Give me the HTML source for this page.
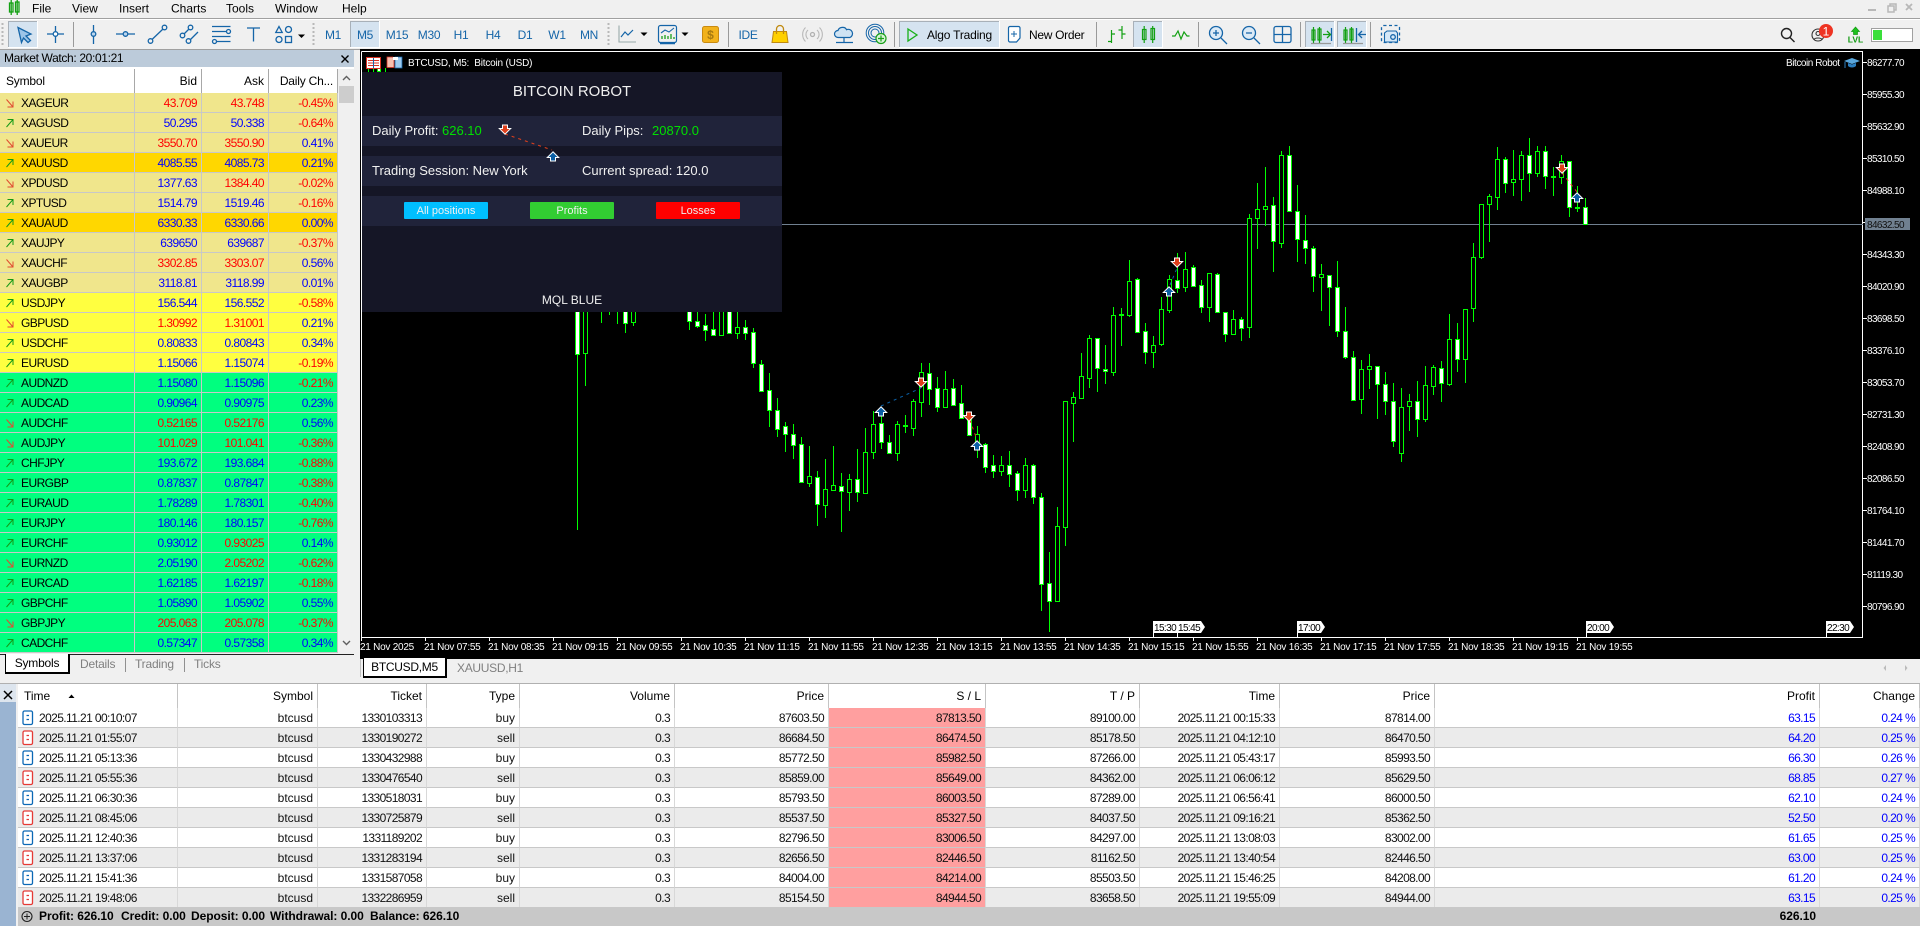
<!DOCTYPE html>
<html><head><meta charset="utf-8"><title>MT5</title>
<style>
html,body{margin:0;padding:0;width:1920px;height:926px;overflow:hidden;background:#f0f0f0;font-family:"Liberation Sans",sans-serif;font-size:12px;color:#000}
.a{position:absolute}
table{position:absolute;border-collapse:separate;border-spacing:0;table-layout:fixed}
td,th{box-sizing:border-box;padding:0 3px;text-align:right;font-weight:normal;white-space:nowrap;overflow:hidden}
#mw{left:0;top:69px;width:338px}
#mw th{height:24px;background:#fff;border-right:1px solid #a8a8a8;padding:0 4px}
#mw th:first-child{text-align:left;letter-spacing:-.2px;padding-left:6px}
#mw td{height:20px;border-bottom:1px solid #c8c8c8;border-right:1px solid #c8c8c8;letter-spacing:-.55px;padding:0 4px 0 0}
#mw td:first-child{text-align:left;padding-left:21px;letter-spacing:-.55px;font-size:12px}
.k td{background:#f0e68c}.g td{background:#ffd700}.y td{background:#ffff40}.s td{background:#00ff7f}
.r{color:#f00}.b{color:#00f}
#tr{left:18px;top:684px;width:1902px}
#tr th{height:24px;background:#fff;border-right:1px solid #c4c4c4;padding:0 4px}
#tr td{height:20px;border-bottom:1px solid #c8c8c8;border-right:1px solid #d8d8d8;padding:0 4px;letter-spacing:-.62px;color:#111}
#tr tr:nth-child(odd) td{background:#fff}
#tr tr:nth-child(even) td{background:#ebebeb}
#tr td.sl{background:#ff9f9f!important}
#tr td.bl{color:#00f}
#tr td.lt{letter-spacing:0}
#tr td:first-child{text-align:left;padding-left:21px;letter-spacing:-.6px}
.sm{position:absolute;top:907px;line-height:19px;font-weight:bold;letter-spacing:-.05px;white-space:nowrap}
</style></head><body>

<div class="a" style="left:0;top:18px;width:1920px;height:1px;background:#a0a0a0"></div>
<div class="a" style="left:0;top:19px;width:1920px;height:1px;background:#fff"></div>
<div class="a" style="left:0;top:49px;width:360px;height:1px;background:#a0a0a0"></div>
<div class="a" style="left:360px;top:49px;width:1560px;height:610px;background:#000"></div>

<!-- Market watch -->
<div class="a" style="left:0;top:50px;width:354px;height:17px;background:#bccbda;line-height:17px;padding-left:4px;letter-spacing:-.35px;box-sizing:border-box">Market Watch: 20:01:21</div>
<div class="a" style="left:0;top:67px;width:354px;height:2px;background:#fff"></div>
<table id="mw"><colgroup><col style="width:135px"><col style="width:67px"><col style="width:67px"><col style="width:69px"></colgroup>
<thead><tr><th>Symbol</th><th>Bid</th><th>Ask</th><th style="letter-spacing:-.2px">Daily Ch...</th></tr></thead><tbody>
<tr class="k"><td>XAGEUR</td><td class="r">43.709</td><td class="r">43.748</td><td class="r">-0.45%</td></tr>
<tr class="k"><td>XAGUSD</td><td class="b">50.295</td><td class="b">50.338</td><td class="r">-0.64%</td></tr>
<tr class="k"><td>XAUEUR</td><td class="r">3550.70</td><td class="r">3550.90</td><td class="b">0.41%</td></tr>
<tr class="g"><td>XAUUSD</td><td class="b">4085.55</td><td class="b">4085.73</td><td class="b">0.21%</td></tr>
<tr class="k"><td>XPDUSD</td><td class="b">1377.63</td><td class="r">1384.40</td><td class="r">-0.02%</td></tr>
<tr class="k"><td>XPTUSD</td><td class="b">1514.79</td><td class="b">1519.46</td><td class="r">-0.16%</td></tr>
<tr class="g"><td>XAUAUD</td><td class="b">6330.33</td><td class="b">6330.66</td><td class="b">0.00%</td></tr>
<tr class="k"><td>XAUJPY</td><td class="b">639650</td><td class="b">639687</td><td class="r">-0.37%</td></tr>
<tr class="k"><td>XAUCHF</td><td class="r">3302.85</td><td class="r">3303.07</td><td class="b">0.56%</td></tr>
<tr class="k"><td>XAUGBP</td><td class="b">3118.81</td><td class="b">3118.99</td><td class="b">0.01%</td></tr>
<tr class="y"><td>USDJPY</td><td class="b">156.544</td><td class="b">156.552</td><td class="r">-0.58%</td></tr>
<tr class="y"><td>GBPUSD</td><td class="r">1.30992</td><td class="r">1.31001</td><td class="b">0.21%</td></tr>
<tr class="y"><td>USDCHF</td><td class="b">0.80833</td><td class="b">0.80843</td><td class="b">0.34%</td></tr>
<tr class="y"><td>EURUSD</td><td class="b">1.15066</td><td class="b">1.15074</td><td class="r">-0.19%</td></tr>
<tr class="s"><td>AUDNZD</td><td class="b">1.15080</td><td class="b">1.15096</td><td class="r">-0.21%</td></tr>
<tr class="s"><td>AUDCAD</td><td class="b">0.90964</td><td class="b">0.90975</td><td class="b">0.23%</td></tr>
<tr class="s"><td>AUDCHF</td><td class="r">0.52165</td><td class="r">0.52176</td><td class="b">0.56%</td></tr>
<tr class="s"><td>AUDJPY</td><td class="r">101.029</td><td class="r">101.041</td><td class="r">-0.36%</td></tr>
<tr class="s"><td>CHFJPY</td><td class="b">193.672</td><td class="b">193.684</td><td class="r">-0.88%</td></tr>
<tr class="s"><td>EURGBP</td><td class="b">0.87837</td><td class="b">0.87847</td><td class="r">-0.38%</td></tr>
<tr class="s"><td>EURAUD</td><td class="b">1.78289</td><td class="b">1.78301</td><td class="r">-0.40%</td></tr>
<tr class="s"><td>EURJPY</td><td class="b">180.146</td><td class="b">180.157</td><td class="r">-0.76%</td></tr>
<tr class="s"><td>EURCHF</td><td class="b">0.93012</td><td class="r">0.93025</td><td class="b">0.14%</td></tr>
<tr class="s"><td>EURNZD</td><td class="b">2.05190</td><td class="r">2.05202</td><td class="r">-0.62%</td></tr>
<tr class="s"><td>EURCAD</td><td class="b">1.62185</td><td class="b">1.62197</td><td class="r">-0.18%</td></tr>
<tr class="s"><td>GBPCHF</td><td class="b">1.05890</td><td class="b">1.05902</td><td class="b">0.55%</td></tr>
<tr class="s"><td>GBPJPY</td><td class="r">205.063</td><td class="r">205.078</td><td class="r">-0.37%</td></tr>
<tr class="s"><td>CADCHF</td><td class="b">0.57347</td><td class="b">0.57358</td><td class="b">0.34%</td></tr>
</tbody></table>
<div class="a" style="left:339px;top:86px;width:15px;height:17px;background:#cdcdcd"></div>

<!-- tab strip left -->
<div class="a" style="left:0;top:654px;width:354px;height:1px;background:#222"></div>
<div class="a" style="left:5px;top:654px;width:65px;height:20px;background:#fff;border:1px solid #000;border-top:0;border-right-width:2px;border-bottom-width:2px;box-sizing:border-box;text-align:center;line-height:18px;letter-spacing:-.2px">Symbols</div>
<div class="a" style="left:80px;top:655px;color:#808080;line-height:18px;letter-spacing:-.2px">Details</div>
<div class="a" style="left:135px;top:655px;color:#808080;line-height:18px;letter-spacing:-.2px">Trading</div>
<div class="a" style="left:194px;top:655px;color:#808080;line-height:18px;letter-spacing:-.2px">Ticks</div>
<div class="a" style="left:125px;top:658px;width:1px;height:14px;background:#909090"></div>
<div class="a" style="left:184px;top:658px;width:1px;height:14px;background:#909090"></div>

<!-- tab strip chart -->
<div class="a" style="left:360px;top:659px;width:1px;height:18px;background:#c0c0c0"></div>
<div class="a" style="left:363px;top:658px;width:84px;height:20px;background:#fff;border:1px solid #000;border-top:0;border-right-width:2px;border-bottom-width:2px;box-sizing:border-box;text-align:center;line-height:18px;letter-spacing:-.3px">BTCUSD,M5</div>
<div class="a" style="left:457px;top:659px;color:#808080;line-height:18px;letter-spacing:-.3px">XAUUSD,H1</div>

<!-- trade table -->
<div class="a" style="left:0;top:683px;width:1920px;height:1px;background:#b0b0b0"></div>
<div class="a" style="left:0;top:684px;width:16px;height:242px;background:#9ab4d2"></div>
<div class="a" style="left:0;top:684px;width:16px;height:18px;background:#dde5ee"></div>
<table id="tr"><colgroup><col style="width:160px"><col style="width:140px"><col style="width:109px"><col style="width:93px"><col style="width:155px"><col style="width:154px"><col style="width:157px"><col style="width:154px"><col style="width:140px"><col style="width:155px"><col style="width:385px"><col style="width:100px"></colgroup>
<thead><tr style="background:#fff"><th style="text-align:left;padding-left:6px">Time</th><th>Symbol</th><th>Ticket</th><th>Type</th><th>Volume</th><th>Price</th><th>S / L</th><th>T / P</th><th>Time</th><th>Price</th><th>Profit</th><th>Change</th></tr></thead><tbody>
<tr><td>2025.11.21 00:10:07</td><td class="lt">btcusd</td><td>1330103313</td><td class="lt">buy</td><td>0.3</td><td>87603.50</td><td class="sl">87813.50</td><td>89100.00</td><td>2025.11.21 00:15:33</td><td>87814.00</td><td class="bl">63.15</td><td class="bl">0.24 %</td></tr>
<tr><td>2025.11.21 01:55:07</td><td class="lt">btcusd</td><td>1330190272</td><td class="lt">sell</td><td>0.3</td><td>86684.50</td><td class="sl">86474.50</td><td>85178.50</td><td>2025.11.21 04:12:10</td><td>86470.50</td><td class="bl">64.20</td><td class="bl">0.25 %</td></tr>
<tr><td>2025.11.21 05:13:36</td><td class="lt">btcusd</td><td>1330432988</td><td class="lt">buy</td><td>0.3</td><td>85772.50</td><td class="sl">85982.50</td><td>87266.00</td><td>2025.11.21 05:43:17</td><td>85993.50</td><td class="bl">66.30</td><td class="bl">0.26 %</td></tr>
<tr><td>2025.11.21 05:55:36</td><td class="lt">btcusd</td><td>1330476540</td><td class="lt">sell</td><td>0.3</td><td>85859.00</td><td class="sl">85649.00</td><td>84362.00</td><td>2025.11.21 06:06:12</td><td>85629.50</td><td class="bl">68.85</td><td class="bl">0.27 %</td></tr>
<tr><td>2025.11.21 06:30:36</td><td class="lt">btcusd</td><td>1330518031</td><td class="lt">buy</td><td>0.3</td><td>85793.50</td><td class="sl">86003.50</td><td>87289.00</td><td>2025.11.21 06:56:41</td><td>86000.50</td><td class="bl">62.10</td><td class="bl">0.24 %</td></tr>
<tr><td>2025.11.21 08:45:06</td><td class="lt">btcusd</td><td>1330725879</td><td class="lt">sell</td><td>0.3</td><td>85537.50</td><td class="sl">85327.50</td><td>84037.50</td><td>2025.11.21 09:16:21</td><td>85362.50</td><td class="bl">52.50</td><td class="bl">0.20 %</td></tr>
<tr><td>2025.11.21 12:40:36</td><td class="lt">btcusd</td><td>1331189202</td><td class="lt">buy</td><td>0.3</td><td>82796.50</td><td class="sl">83006.50</td><td>84297.00</td><td>2025.11.21 13:08:03</td><td>83002.00</td><td class="bl">61.65</td><td class="bl">0.25 %</td></tr>
<tr><td>2025.11.21 13:37:06</td><td class="lt">btcusd</td><td>1331283194</td><td class="lt">sell</td><td>0.3</td><td>82656.50</td><td class="sl">82446.50</td><td>81162.50</td><td>2025.11.21 13:40:54</td><td>82446.50</td><td class="bl">63.00</td><td class="bl">0.25 %</td></tr>
<tr><td>2025.11.21 15:41:36</td><td class="lt">btcusd</td><td>1331587058</td><td class="lt">buy</td><td>0.3</td><td>84004.00</td><td class="sl">84214.00</td><td>85503.50</td><td>2025.11.21 15:46:25</td><td>84208.00</td><td class="bl">61.20</td><td class="bl">0.24 %</td></tr>
<tr><td>2025.11.21 19:48:06</td><td class="lt">btcusd</td><td>1332286959</td><td class="lt">sell</td><td>0.3</td><td>85154.50</td><td class="sl">84944.50</td><td>83658.50</td><td>2025.11.21 19:55:09</td><td>84944.00</td><td class="bl">63.15</td><td class="bl">0.25 %</td></tr>
</tbody></table>
<div class="a" style="left:18px;top:907px;width:1902px;height:19px;background:#c8c8c8"></div>
<div class="sm" style="left:39px">Profit: 626.10</div>
<div class="sm" style="left:121px">Credit: 0.00</div>
<div class="sm" style="left:191px">Deposit: 0.00</div>
<div class="sm" style="left:270px">Withdrawal: 0.00</div>
<div class="sm" style="left:370px">Balance: 626.10</div>
<div class="sm" style="left:1716px;width:100px;text-align:right">626.10</div>

<svg class="a" style="left:0;top:0;pointer-events:none" width="1920" height="926" viewBox="0 0 1920 926" font-family="Liberation Sans, sans-serif">
<defs>
<g id="u" fill="none" stroke="#159a15" stroke-width="1"><path d="M6.500 4L13-3.500M7.500-3.500H13V2"/></g>
<g id="d" fill="none" stroke="#e04a30" stroke-width="1"><path d="M6.500-3.500L13 4M7.500 4H13V-1.500"/></g>
<g id="ib" fill="none" stroke="#0b68b5" stroke-width="1.300"><rect x="23" y="-6.500" width="9.500" height="13.500" rx="1.500" fill="#fff"/><path d="M26.500-2h2.500M26.500 2h2.500"/></g>
<g id="ir" fill="none" stroke="#e53935" stroke-width="1.300"><rect x="23" y="-6.500" width="9.500" height="13.500" rx="1.500" fill="#fff"/><path d="M26.500-2h2.500M26.500 2h2.500"/></g>
<polygon id="au" points="0,-4.500 4.500,0 2,0 2,3.500 -2,3.500 -2,0 -4.500,0" fill="#0b5fa5" stroke="#fff" stroke-width="2" paint-order="stroke"/>
<polygon id="ad" points="0,4.500 4.500,0 2,0 2,-3.500 -2,-3.500 -2,0 -4.500,0" fill="#e0401c" stroke="#fff" stroke-width="2" paint-order="stroke"/>
</defs>

<!-- market watch arrows -->
<use href="#d" y="103"/><use href="#u" y="123"/><use href="#d" y="143"/><use href="#u" y="163"/><use href="#d" y="183"/><use href="#u" y="203"/><use href="#u" y="223"/><use href="#u" y="243"/><use href="#d" y="263"/><use href="#u" y="283"/><use href="#u" y="303"/><use href="#d" y="323"/><use href="#u" y="343"/><use href="#u" y="363"/><use href="#u" y="383"/><use href="#u" y="403"/><use href="#d" y="423"/><use href="#d" y="443"/><use href="#u" y="463"/><use href="#u" y="483"/><use href="#u" y="503"/><use href="#u" y="523"/><use href="#u" y="543"/><use href="#d" y="563"/><use href="#u" y="583"/><use href="#u" y="603"/><use href="#d" y="623"/><use href="#u" y="643"/>
<!-- position icons -->
<use href="#ib" y="717.500"/><use href="#ir" y="737.500"/><use href="#ib" y="757.500"/><use href="#ir" y="777.500"/><use href="#ib" y="797.500"/><use href="#ir" y="817.500"/><use href="#ib" y="837.500"/><use href="#ir" y="857.500"/><use href="#ib" y="877.500"/><use href="#ir" y="897.500"/>
<path d="M68.500 698l3-3.500 3 3.500z" fill="#000"/>
<path d="M4 691l8 8M12 691l-8 8" stroke="#000" stroke-width="1.500"/>
<circle cx="27" cy="916.500" r="5" fill="none" stroke="#222" stroke-width="1.100"/><path d="M24 916.500h6M27 913.500v6" stroke="#222"/>
<!-- mw controls -->
<path d="M341.500 55.500l7 7M348.500 55.500l-7 7" stroke="#000" stroke-width="1.400"/>
<path d="M343 80l3.500-3.500 3.500 3.500" fill="none" stroke="#606060" stroke-width="1.400"/>
<path d="M343 641l3.500 3.500 3.500-3.500" fill="none" stroke="#606060" stroke-width="1.400"/>
<path d="M1886 665l-2.500 3 2.500 3zM1905 665l2.500 3-2.500 3z" fill="#bbb"/>

<!-- menu -->
<g font-size="12" fill="#000">
<text x="32" y="12.500">File</text><text x="72" y="12.500">View</text><text x="119" y="12.500">Insert</text><text x="171" y="12.500">Charts</text><text x="226" y="12.500">Tools</text><text x="275" y="12.500">Window</text><text x="342" y="12.500">Help</text>
</g>
<g fill="none" stroke="#12a012" stroke-width="1.300"><rect x="9.500" y="3" width="3.500" height="9"/><rect x="15.500" y="2" width="3.500" height="10"/><path d="M11.200 0v15M17.200 0v15"/></g>
<path d="M1868 10h8" stroke="#b8b8b8" stroke-width="2"/>
<path d="M1888 6h6v6h-6zM1890 6v-2h6v6h-2" fill="none" stroke="#b8b8b8" stroke-width="1.500"/>
<path d="M1906 4l6 6M1912 4l-6 6" stroke="#b8b8b8" stroke-width="1.800"/>

<!-- toolbar active buttons -->
<g fill="#d5e3f0" stroke="#fff"><rect x="8.500" y="21.500" width="29" height="26"/><rect x="350.500" y="21.500" width="29" height="26"/><rect x="899.500" y="21.500" width="100" height="26"/><rect x="1133.500" y="21.500" width="29" height="26"/><rect x="1305.500" y="21.500" width="29" height="26"/><rect x="1337.500" y="21.500" width="29" height="26"/></g>
<path d="M8.500 47V21.500H37M350.500 47V21.500H379M899.500 47V21.500H999M1133.500 47V21.500H1162M1305.500 47V21.500H1334M1337.500 47V21.500H1366" fill="none" stroke="#a8b0b8"/>
<!-- grips & seps -->
<path d="M2.500 23v24M313.500 23v24M608.500 23v24" stroke="#b8b8b8" stroke-width="2" stroke-dasharray="2 2"/>
<path d="M73.500 22v25M728.500 22v25M894.500 22v25M1096.500 22v25M1198.500 22v25M1300.500 22v25M1370.500 22v25" stroke="#9a9a9a"/>

<g fill="none" stroke="#1565a8" stroke-width="1.300">
<path d="M18 27.500l13 6.500-5 2 4.500 4.500-2.500 2-4.500-4.500-2 4.500z" fill="#9cc4e8"/>
<path d="M47 34h17M55.500 26v17"/><circle cx="55.500" cy="34" r="2.300" fill="#fff"/>
<path d="M93.500 25v19"/><circle cx="93.500" cy="34" r="2.300" fill="#bcd6ee"/>
<path d="M116 34h19"/><circle cx="125.500" cy="34" r="2.300" fill="#bcd6ee"/>
<path d="M152 39.500l11-10.500"/><circle cx="150.500" cy="41" r="2.300"/><circle cx="164.500" cy="27.500" r="2.300"/>
<path d="M184 34l5-5M190 40l8-8"/><circle cx="182.500" cy="35.500" r="2.300"/><circle cx="190.500" cy="27.500" r="2.300"/><circle cx="188.500" cy="41" r="2.300"/>
<path d="M212 26.500h18.500M212 31.500h14.500M212 36.500h18.500M217 41.500h13.500"/><circle cx="228.500" cy="31.500" r="2"/><circle cx="214.500" cy="41.500" r="2"/>
<path d="M247 28h13M253.500 28v13.500"/>
<path d="M279 26.500l3.200 6h-6.400z"/><circle cx="288.500" cy="29.500" r="3"/><circle cx="279" cy="39.500" r="3"/><rect x="285.500" y="36.500" width="6" height="6"/>
</g>
<path d="M298 34.500h7l-3.500 3.500zM640.500 32.500h7l-3.500 3.500zM681.500 32.500h7l-3.500 3.500z" fill="#000"/>
<g font-size="12" fill="#1565a8" text-anchor="middle" letter-spacing="-.3">
<text x="333" y="39">M1</text><text x="365" y="39">M5</text><text x="397" y="39">M15</text><text x="429" y="39">M30</text><text x="461" y="39">H1</text><text x="493" y="39">H4</text><text x="525" y="39">D1</text><text x="557" y="39">W1</text><text x="589" y="39">MN</text><text x="748" y="39">IDE</text>
</g>
<!-- chart type icon -->
<g fill="none">
<path d="M619 25.500v16.500h17" stroke="#9aa" stroke-width="1.100"/><path d="M621 37l4-5 3 3 5-5" stroke="#1565a8" stroke-width="1.200"/>
<rect x="658.500" y="25.500" width="18" height="17" rx="2" stroke="#1565a8" stroke-width="1.200"/><path d="M660 43.500h15" stroke="#1565a8" stroke-width="1.500"/>
<path d="M661 33l4-3 4 2 5-4" stroke="#1565a8" stroke-width="1.100"/><path d="M662 39v-3M665 39v-4M668 39v-3M671 39v-5M674 39v-2" stroke="#18a018" stroke-width="1.300"/>
<rect x="702.500" y="26.500" width="16" height="16" rx="2" fill="#f2b21b" stroke="#c98a10"/>
<path d="M773.500 31.500h13l1.500 11h-16z" fill="#ffd000" stroke="#c08a10"/><path d="M776.500 34v-5a3.500 3.500 0 0 1 7 0v5" stroke="#c08a10" stroke-width="1.300"/>
<circle cx="812.500" cy="34.500" r="2" stroke="#b0b0b0" stroke-width="1.300"/><path d="M808 30a6 6 0 0 0 0 9M817 30a6 6 0 0 1 0 9M805.500 27.500a10 10 0 0 0 0 14M819.500 27.500a10 10 0 0 1 0 14" stroke="#b8b8b8" stroke-width="1.100"/>
<path d="M838 37.500a3.500 3.500 0 0 1 0-7c1-3.500 7-4.500 8.500-.8a3.900 3.900 0 0 1 3.500 7.800z" fill="#cfe3f3" stroke="#1565a8" stroke-width="1.200"/><path d="M844 38v4M836 42.500h17" stroke="#1565a8" stroke-width="1.200"/>
<circle cx="875" cy="33" r="6.500" stroke="#1565a8"/><circle cx="875" cy="33" r="4" stroke="#1565a8"/><circle cx="875" cy="33" r="8.800" stroke="#1565a8"/>
<circle cx="881" cy="38.500" r="5" fill="#d8f4d8" stroke="#18a018" stroke-width="1.200"/><path d="M878 38.500h6M881 35.500v6" stroke="#18a018" stroke-width="1.200"/>
<path d="M908 29l9 6-9 6z" stroke="#18b018" stroke-width="1.300"/>
<path d="M1010 26.500h8.500a1.500 1.500 0 0 1 1.500 1.500v10l-3.500 4h-6.500a1.500 1.500 0 0 1-1.500-1.500v-12.500a1.500 1.500 0 0 1 1.500-1.500z" fill="#fff" stroke="#1565a8" stroke-width="1.200"/><path d="M1011 34h6M1014 31v6" stroke="#1565a8"/>
</g>
<text x="710.500" y="39" font-size="12" font-weight="bold" fill="#a87a10" text-anchor="middle">$</text>
<text x="927" y="39" font-size="12" letter-spacing="-.2">Algo Trading</text>
<text x="1029" y="39" font-size="12" letter-spacing="-.3">New Order</text>
<!-- bar/candle/line -->
<g fill="none" stroke="#12a012" stroke-width="1.200">
<path d="M1111.500 30v13M1108 41.500h3.500M1111.500 34h3.500M1122 26v13M1118.500 30h3.500M1122 34h3.500"/>
<rect x="1142.500" y="29.500" width="3.500" height="10"/><rect x="1151" y="28.500" width="3.500" height="11"/><path d="M1144.200 26v17M1152.700 26v17"/>
<path d="M1172 36h3l3-5 3 8 3-7 3 4h2.500"/>
<rect x="1312" y="30" width="3" height="10"/><rect x="1318" y="29" width="3" height="11"/><path d="M1313.500 27v16M1319.500 27v16"/>
<rect x="1344" y="30" width="3" height="10"/><rect x="1350" y="29" width="3" height="11"/><path d="M1345.500 27v16M1351.500 27v16"/>
</g>
<g fill="none" stroke="#1565a8" stroke-width="1.300">
<circle cx="1216" cy="33" r="6.500" fill="#dceaf6"/><path d="M1221 38l6 6M1213 33h6M1216 30v6"/>
<circle cx="1249" cy="33" r="6.500" fill="#dceaf6"/><path d="M1254 38l6 6M1246 33h6"/>
<rect x="1274" y="26.500" width="17" height="16" rx="2"/><path d="M1274 34.500h17M1282.500 26.500v16"/>
<path d="M1323 34.500h7M1327 31l3.500 3.500-3.500 3.500" stroke="#12a012"/><path d="M1331.500 28v13"/><path d="M1311 43.500h20" stroke="#999"/>
<path d="M1356.500 28v14"/><path d="M1366 34.500h-7M1362 31l-3.500 3.500 3.500 3.500"/><path d="M1343 43.500h20" stroke="#999"/>
<rect x="1381.500" y="25.500" width="18" height="17" rx="2" stroke-dasharray="3 2.500"/><path d="M1387 31h9l1.500 2v9h-13v-9z" fill="#d6e8f7" stroke-width="1.100"/><circle cx="1393" cy="37" r="2.300"/>
</g>
<g fill="none" stroke="#222" stroke-width="1.400"><circle cx="1786.500" cy="33.500" r="5"/><path d="M1790 37.500l4.500 4.500"/></g>
<g fill="none" stroke="#333" stroke-width="1.100"><circle cx="1818" cy="35" r="6"/><circle cx="1818" cy="33.500" r="2"/><path d="M1814 39.500c1-2 7-2 8 0"/></g>
<circle cx="1826" cy="31" r="7" fill="#ee3322"/><text x="1826" y="35.500" font-size="12" fill="#fff" text-anchor="middle">1</text>
<path d="M1855.500 27l4 4.500h-2v3h-4v-3h-2z" fill="#1cc21c" stroke="#159a15" stroke-width=".7"/>
<text x="1855.500" y="42.500" font-size="8.500" fill="#129a12" text-anchor="middle" font-weight="bold">LVL</text>
<rect x="1871.500" y="28.500" width="41" height="13" fill="#fff" stroke="#a0a0a0"/><rect x="1873" y="30" width="9" height="10" fill="#3adf3a"/>

<!-- CHART -->
<path d="M361.500 51.500H1862.500V637" fill="none" stroke="#fff"/>
<path d="M361.500 51.500V637.500H1863" fill="none" stroke="#fff"/>
<path d="M782 224.500H1863" stroke="#708090"/>
<g shape-rendering="crispEdges" stroke="#00ff00" fill="none">
<path stroke-width="1" d="M577.500 280V530M585.500 300V386M601.500 300V323M609.500 300V315M617.500 300V324M625.500 300V333M633.500 300V326M689.500 300V330M697.500 300V328M705.500 314V341M713.500 300V336M721.500 300V335M729.500 300V334M737.500 312V339M745.500 320V340M753.500 328V368M761.500 360V392M769.500 373V427M777.500 398V437M785.500 422V452M793.500 424V459M801.500 437V483M809.500 446V487M817.500 471V526M825.500 459V518M833.500 446V491M841.500 473V532M849.500 474V511M857.500 449V502M865.500 428V494M873.500 411V459M881.500 415V449M889.500 435V454M897.500 421V461M905.500 415V433M913.500 399V436M921.500 363V417M929.500 363V405M937.500 377V412M945.500 371V407M953.500 379V405M961.500 385V418M969.500 415V435M977.500 426V458M985.500 443V473M993.500 455V478M1001.500 456V476M1009.500 451V487M1017.500 471V501M1025.500 458V498M1033.500 464V504M1041.500 493V611M1049.500 552V632M1057.500 507V602M1065.500 401V546M1073.500 392V442M1081.500 353V399M1089.500 335V388M1097.500 338V392M1105.500 345V384M1113.500 307V376M1121.500 308V346M1129.500 260V317M1137.500 278V332M1145.500 323V364M1153.500 336V368M1161.500 297V346M1169.500 275V313M1177.500 253V293M1185.500 252V292M1193.500 265V287M1201.500 280V313M1209.500 273V322M1217.500 273V313M1225.500 312V342M1233.500 310V335M1241.500 317V341M1249.500 214V338M1257.500 183V249M1265.500 167V226M1273.500 197V272M1281.500 151V248M1289.500 146V211M1297.500 185V262M1305.500 215V264M1313.500 246V292M1321.500 264V311M1329.500 275V326M1337.500 261V337M1345.500 307V359M1353.500 351V401M1361.500 360V414M1369.500 354V389M1377.500 366V419M1385.500 372V415M1393.500 383V447M1401.500 388V462M1409.500 394V431M1417.500 381V437M1425.500 366V422M1433.500 365V395M1441.500 361V402M1449.500 314V386M1457.500 323V372M1465.500 309V383M1473.500 243V322M1481.500 204V259M1489.500 194V242M1497.500 147V210M1505.500 157V193M1513.500 150V196M1521.500 151V201M1529.500 138V192M1537.500 146V177M1545.500 146V189M1553.500 167V196M1561.500 155V184M1569.500 161V217M1577.500 186V212M1585.500 198V224M903 426.500h5M903 425.500h5M1119 315.500h5M1119 314.500h5M1551 177.500h5M1551 176.500h5M1575 208.500h5M1575 207.500h5"/>
<path fill="#000" d="M583.500 300.500h4V353.500h-4zM631.500 300.500h4V322.500h-4zM719.500 300.500h4V335.500h-4zM735.500 327.500h4V333.500h-4zM807.500 476.500h4V483.500h-4zM823.500 489.500h4V505.500h-4zM831.500 485.500h4V490.500h-4zM847.500 479.500h4V492.500h-4zM863.500 452.500h4V493.500h-4zM871.500 424.500h4V452.500h-4zM895.500 424.500h4V453.500h-4zM911.500 401.500h4V428.500h-4zM919.500 372.500h4V402.500h-4zM943.500 389.500h4V407.500h-4zM975.500 434.500h4V446.500h-4zM999.500 465.500h4V471.500h-4zM1023.500 465.500h4V490.500h-4zM1055.500 526.500h4V601.500h-4zM1063.500 401.500h4V527.500h-4zM1071.500 397.500h4V403.500h-4zM1079.500 376.500h4V398.500h-4zM1087.500 338.500h4V378.500h-4zM1111.500 315.500h4V372.500h-4zM1127.500 281.500h4V315.500h-4zM1151.500 345.500h4V352.500h-4zM1159.500 309.500h4V344.500h-4zM1167.500 279.500h4V310.500h-4zM1183.500 269.500h4V287.500h-4zM1207.500 273.500h4V307.500h-4zM1231.500 319.500h4V334.500h-4zM1247.500 218.500h4V327.500h-4zM1255.500 209.500h4V218.500h-4zM1263.500 206.500h4V209.500h-4zM1279.500 155.500h4V243.500h-4zM1319.500 274.500h4V277.500h-4zM1359.500 369.500h4V399.500h-4zM1367.500 366.500h4V369.500h-4zM1399.500 407.500h4V453.500h-4zM1407.500 401.500h4V406.500h-4zM1423.500 385.500h4V419.500h-4zM1431.500 367.500h4V386.500h-4zM1447.500 339.500h4V384.500h-4zM1463.500 309.500h4V359.500h-4zM1471.500 257.500h4V308.500h-4zM1479.500 204.500h4V257.500h-4zM1487.500 196.500h4V204.500h-4zM1495.500 159.500h4V197.500h-4zM1511.500 179.500h4V182.500h-4zM1519.500 155.500h4V179.500h-4zM1535.500 151.500h4V173.500h-4zM1559.500 161.500h4V177.500h-4z"/>
<path fill="#fff" d="M575.500 280.500h4V354.500h-4zM623.500 300.500h4V323.500h-4zM687.500 300.500h4V321.500h-4zM695.500 321.500h4V326.500h-4zM703.500 325.500h4V330.500h-4zM711.500 329.500h4V335.500h-4zM727.500 300.500h4V333.500h-4zM743.500 327.500h4V333.500h-4zM751.500 332.500h4V363.500h-4zM759.500 364.500h4V391.500h-4zM767.500 390.500h4V410.500h-4zM775.500 410.500h4V429.500h-4zM783.500 426.500h4V434.500h-4zM791.500 434.500h4V445.500h-4zM799.500 444.500h4V482.500h-4zM815.500 477.500h4V504.500h-4zM839.500 486.500h4V491.500h-4zM855.500 479.500h4V492.500h-4zM879.500 423.500h4V442.500h-4zM887.500 442.500h4V453.500h-4zM927.500 373.500h4V389.500h-4zM935.500 388.500h4V407.500h-4zM951.500 388.500h4V405.500h-4zM959.500 403.500h4V418.500h-4zM967.500 418.500h4V435.500h-4zM983.500 444.500h4V467.500h-4zM991.500 465.500h4V471.500h-4zM1007.500 465.500h4V474.500h-4zM1015.500 473.500h4V490.500h-4zM1031.500 465.500h4V497.500h-4zM1039.500 497.500h4V584.500h-4zM1047.500 583.500h4V601.500h-4zM1095.500 338.500h4V368.500h-4zM1103.500 369.500h4V371.500h-4zM1135.500 279.500h4V332.500h-4zM1143.500 331.500h4V352.500h-4zM1175.500 280.500h4V288.500h-4zM1191.500 267.500h4V286.500h-4zM1199.500 285.500h4V307.500h-4zM1215.500 274.500h4V312.500h-4zM1223.500 312.500h4V334.500h-4zM1239.500 319.500h4V328.500h-4zM1271.500 205.500h4V241.500h-4zM1287.500 155.500h4V211.500h-4zM1295.500 211.500h4V239.500h-4zM1303.500 240.500h4V248.500h-4zM1311.500 248.500h4V276.500h-4zM1327.500 275.500h4V287.500h-4zM1335.500 287.500h4V331.500h-4zM1343.500 331.500h4V357.500h-4zM1351.500 357.500h4V400.500h-4zM1375.500 366.500h4V384.500h-4zM1383.500 384.500h4V401.500h-4zM1391.500 401.500h4V441.500h-4zM1415.500 401.500h4V419.500h-4zM1439.500 368.500h4V383.500h-4zM1455.500 339.500h4V359.500h-4zM1503.500 159.500h4V183.500h-4zM1527.500 155.500h4V173.500h-4zM1543.500 151.500h4V176.500h-4zM1567.500 161.500h4V207.500h-4zM1583.500 207.500h4V224.500h-4z"/>
<path d="M368.500 68v4M373.500 68v4M385.500 68v4"/><rect x="377.500" y="68.500" width="3" height="3" fill="#fff"/>
</g>

<!-- panel -->
<rect x="362" y="72" width="420" height="240" fill="#151626"/>
<rect x="362" y="116" width="420" height="30" fill="#20233a"/>
<rect x="362" y="156" width="420" height="30" fill="#20233a"/>
<rect x="362" y="196" width="420" height="30" fill="#20233a"/>
<rect x="404" y="202" width="84" height="17" rx="1" fill="#00bfff"/>
<rect x="530" y="202" width="84" height="17" rx="1" fill="#32cd32"/>
<rect x="656" y="202" width="84" height="17" rx="1" fill="#ff0000"/>
<g fill="#f0f0f0" font-size="13">
<text x="572" y="96" font-size="15" text-anchor="middle">BITCOIN ROBOT</text>
<text x="372" y="135">Daily Profit:</text><text x="442" y="135" fill="#00e000">626.10</text>
<text x="582" y="135">Daily Pips:</text><text x="652" y="135" fill="#00e000">20870.0</text>
<text x="372" y="175">Trading Session: New York</text>
<text x="582" y="175">Current spread: 120.0</text>
<text x="446" y="214" font-size="11" text-anchor="middle">All positions</text>
<text x="572" y="214" font-size="11" text-anchor="middle">Profits</text>
<text x="698" y="214" font-size="11" text-anchor="middle">Losses</text>
<text x="572" y="304" font-size="12" text-anchor="middle">MQL BLUE</text>
</g>

<!-- trades -->
<g fill="none" stroke-dasharray="3 4" stroke-width="1">
<path d="M505 134L552 150" stroke="#e0401c"/>
<path d="M881 406L921 388" stroke="#0b5fa5"/>
<path d="M970 420L977 440" stroke="#e0201c"/>
<path d="M1170 285L1177 268" stroke="#0b5fa5"/>
<path d="M1562 173L1577 192" stroke="#e0401c"/>
</g>
<use href="#ad" x="505" y="129"/><use href="#au" x="553" y="157"/>
<use href="#au" x="881" y="412"/><use href="#ad" x="921" y="382"/>
<use href="#ad" x="969" y="416"/><use href="#au" x="977" y="446"/>
<use href="#ad" x="1177" y="262"/><use href="#au" x="1169" y="292"/>
<use href="#ad" x="1562" y="168"/><use href="#au" x="1577" y="198"/>

<!-- chart header -->
<rect x="366.500" y="57.500" width="14" height="11" fill="#fff" stroke="#d83020"/>
<path d="M368 60.500h11M368 63h11M368 65.500h11" stroke="#d83020"/><path d="M373.500 58v10" stroke="#1565a8"/>
<path d="M387 57h6l1 1.500v9h-7z" fill="#f6c0b0" stroke="#d83020" stroke-width=".8"/><path d="M395 57h7v11h-7z" fill="#9ecbf0" stroke="#1565a8" stroke-width=".8"/><rect x="393" y="57" width="5" height="3" fill="#fff"/>
<text x="408" y="66" font-size="10" fill="#fff" letter-spacing="-.2" xml:space="preserve">BTCUSD, M5:  Bitcoin (USD)</text>
<text x="1786" y="66" font-size="10" fill="#fff" letter-spacing="-.45">Bitcoin Robot</text>
<path d="M1844 61l8-3 8 3-8 3z" fill="#5aa7dc"/><path d="M1848 63v3c2 2 6 2 8 0v-3l-4 1.500z" fill="#2b7fc0"/><path d="M1845 62v6" stroke="#2b7fc0"/>

<!-- price axis -->
<g fill="#fff" font-size="10" letter-spacing="-.6">
<text x="1867" y="66">86277.70</text><text x="1867" y="98">85955.30</text><text x="1867" y="130">85632.90</text><text x="1867" y="162">85310.50</text><text x="1867" y="194">84988.10</text><text x="1867" y="226">84665.70</text><text x="1867" y="258">84343.30</text><text x="1867" y="290">84020.90</text><text x="1867" y="322">83698.50</text><text x="1867" y="354">83376.10</text><text x="1867" y="386">83053.70</text><text x="1867" y="418">82731.30</text><text x="1867" y="450">82408.90</text><text x="1867" y="482">82086.50</text><text x="1867" y="514">81764.10</text><text x="1867" y="546">81441.70</text><text x="1867" y="578">81119.30</text><text x="1867" y="610">80796.90</text>
</g>
<path d="M1863 62.500h4M1863 94.500h4M1863 126.500h4M1863 158.500h4M1863 190.500h4M1863 222.500h4M1863 254.500h4M1863 286.500h4M1863 318.500h4M1863 350.500h4M1863 382.500h4M1863 414.500h4M1863 446.500h4M1863 478.500h4M1863 510.500h4M1863 542.500h4M1863 574.500h4M1863 606.500h4" stroke="#fff"/>
<rect x="1865" y="218" width="45" height="12" fill="#708090"/>
<text x="1867" y="228" font-size="10" letter-spacing="-.6" fill="#111">84632.50</text>

<!-- time axis -->
<path d="M361.500 637v4M425.500 637v4M489.500 637v4M553.500 637v4M617.500 637v4M681.500 637v4M745.500 637v4M809.500 637v4M873.500 637v4M937.500 637v4M1001.500 637v4M1065.500 637v4M1129.500 637v4M1193.500 637v4M1257.500 637v4M1321.500 637v4M1385.500 637v4M1449.500 637v4M1513.500 637v4M1577.500 637v4" stroke="#fff"/>
<g fill="#fff" font-size="10" letter-spacing="-.25">
<text x="360" y="650">21 Nov 2025</text><text x="424" y="650">21 Nov 07:55</text><text x="488" y="650">21 Nov 08:35</text><text x="552" y="650">21 Nov 09:15</text><text x="616" y="650">21 Nov 09:55</text><text x="680" y="650">21 Nov 10:35</text><text x="744" y="650">21 Nov 11:15</text><text x="808" y="650">21 Nov 11:55</text><text x="872" y="650">21 Nov 12:35</text><text x="936" y="650">21 Nov 13:15</text><text x="1000" y="650">21 Nov 13:55</text><text x="1064" y="650">21 Nov 14:35</text><text x="1128" y="650">21 Nov 15:15</text><text x="1192" y="650">21 Nov 15:55</text><text x="1256" y="650">21 Nov 16:35</text><text x="1320" y="650">21 Nov 17:15</text><text x="1384" y="650">21 Nov 17:55</text><text x="1448" y="650">21 Nov 18:35</text><text x="1512" y="650">21 Nov 19:15</text><text x="1576" y="650">21 Nov 19:55</text>
</g>
<!-- flags -->
<g fill="#fff"><path d="M1153 621h24v12h-24zM1153 633h1v4h-1z"/><path d="M1177 621h24l4 6-4 6h-24zM1177 633h1v4h-1z"/><path d="M1297 621h24l4 6-4 6h-24zM1297 633h1v4h-1z"/><path d="M1586 621h24l4 6-4 6h-24zM1586 633h1v4h-1z"/><path d="M1826 621h24l4 6-4 6h-24zM1826 633h1v4h-1z"/></g>
<g fill="#000" font-size="10" letter-spacing="-.6">
<text x="1154" y="631">15:30</text><text x="1178" y="631">15:45</text><text x="1298" y="631">17:00</text><text x="1587" y="631">20:00</text><text x="1827" y="631">22:30</text>
</g>
</svg>
</body></html>
